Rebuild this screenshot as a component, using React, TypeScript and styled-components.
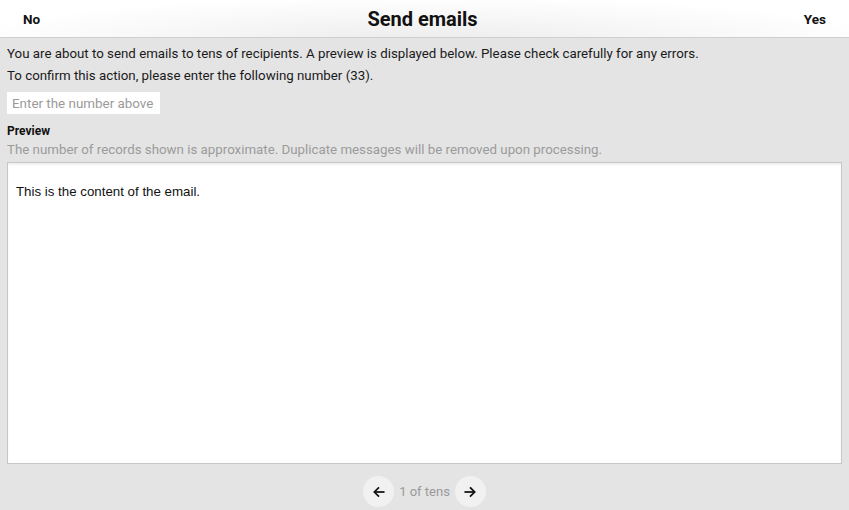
import React from "react";
import styled, { createGlobalStyle } from "styled-components";

const Global = createGlobalStyle`
  html, body { margin: 0; padding: 0; background: #e4e4e4; }
  body { font-family: Roboto, "Helvetica Neue", Arial, sans-serif; color: #111; }
  * { box-sizing: border-box; }
`;

const Page = styled.div`
  width: 849px;
  height: 510px;
  display: flex;
  flex-direction: column;
  background: #e4e4e4;
  overflow: hidden;
`;

const Header = styled.header`
  height: 38px;
  flex: none;
  display: grid;
  grid-template-columns: 1fr auto 1fr;
  align-items: center;
  padding: 0 23px;
  background: radial-gradient(ellipse 55% 120% at 50% 110%, #ececec 0%, #f7f7f7 55%, #ffffff 100%);
  border-bottom: 1px solid #cfcfcf;
`;

const HeaderButton = styled.button<{ $align: "left" | "right" }>`
  justify-self: ${(p) => (p.$align === "left" ? "start" : "end")};
  background: none;
  border: none;
  padding: 0;
  font-family: Roboto, sans-serif;
  font-weight: 700;
  font-size: 13.5px;
  color: #111;
  cursor: pointer;
`;

const Title = styled.h1`
  margin: 0 0 0 -4px;
  font-size: 20px;
  font-weight: 700;
  color: #111;
`;

const Body = styled.main`
  flex: 1;
  display: flex;
  flex-direction: column;
  padding: 5px 7px 0 7px;
  min-height: 0;
`;

const Line = styled.p`
  margin: 0;
  font-size: 13.3px;
  line-height: 22px;
  color: #1a1a1a;
`;

const NumberInput = styled.input`
  margin-top: 5px;
  width: 153px;
  height: 22px;
  border: none;
  outline: none;
  background: #fff;
  padding: 0 5px;
  font-family: Roboto, sans-serif;
  font-size: 13.4px;
  color: #222;
  &::placeholder { color: #9a9a9a; }
`;

const SectionTitle = styled.div`
  margin-top: 9px;
  font-size: 12px;
  font-weight: 700;
  line-height: 16px;
  color: #111;
`;

const Note = styled.div`
  font-size: 13.3px;
  line-height: 21px;
  color: #9b9b9b;
`;

const PreviewBox = styled.div`
  margin-top: 2px;
  height: 302px;
  background: #fff;
  border: 1px solid #c6c6c6;
  box-shadow: inset 0 2px 2px rgba(0, 0, 0, 0.06);
  padding: 21px 8px;
  font-family: "Liberation Sans", Arial, sans-serif;
  font-size: 13.3px;
  color: #111;
`;

const Pager = styled.nav`
  display: flex;
  align-items: center;
  justify-content: center;
  gap: 5px;
  margin-top: 12px;
`;

const RoundButton = styled.button`
  width: 31px;
  height: 31px;
  border-radius: 50%;
  border: none;
  background: #f1f1f1;
  display: flex;
  align-items: center;
  justify-content: center;
  padding: 0;
  cursor: pointer;
`;

const PageLabel = styled.span`
  font-size: 13px;
  color: #999;
`;

const Arrow = ({ dir }: { dir: "left" | "right" }) => (
  <svg width="14" height="14" viewBox="0 0 24 24" fill="none" stroke="#111" strokeWidth="3" strokeLinecap="square">
    {dir === "left" ? (
      <>
        <path d="M20 12H5" />
        <path d="M11 5l-7 7 7 7" strokeLinejoin="miter" />
      </>
    ) : (
      <>
        <path d="M4 12h15" />
        <path d="M13 5l7 7-7 7" strokeLinejoin="miter" />
      </>
    )}
  </svg>
);

export default function App() {
  return (
    <Page>
      <Global />
      <Header>
        <HeaderButton $align="left">No</HeaderButton>
        <Title>Send emails</Title>
        <HeaderButton $align="right">Yes</HeaderButton>
      </Header>
      <Body>
        <Line>You are about to send emails to tens of recipients. A preview is displayed below. Please check carefully for any errors.</Line>
        <Line>To confirm this action, please enter the following number (33).</Line>
        <NumberInput placeholder="Enter the number above" />
        <SectionTitle>Preview</SectionTitle>
        <Note>The number of records shown is approximate. Duplicate messages will be removed upon processing.</Note>
        <PreviewBox>This is the content of the email.</PreviewBox>
        <Pager>
          <RoundButton aria-label="Previous"><Arrow dir="left" /></RoundButton>
          <PageLabel>1 of tens</PageLabel>
          <RoundButton aria-label="Next"><Arrow dir="right" /></RoundButton>
        </Pager>
      </Body>
    </Page>
  );
}
